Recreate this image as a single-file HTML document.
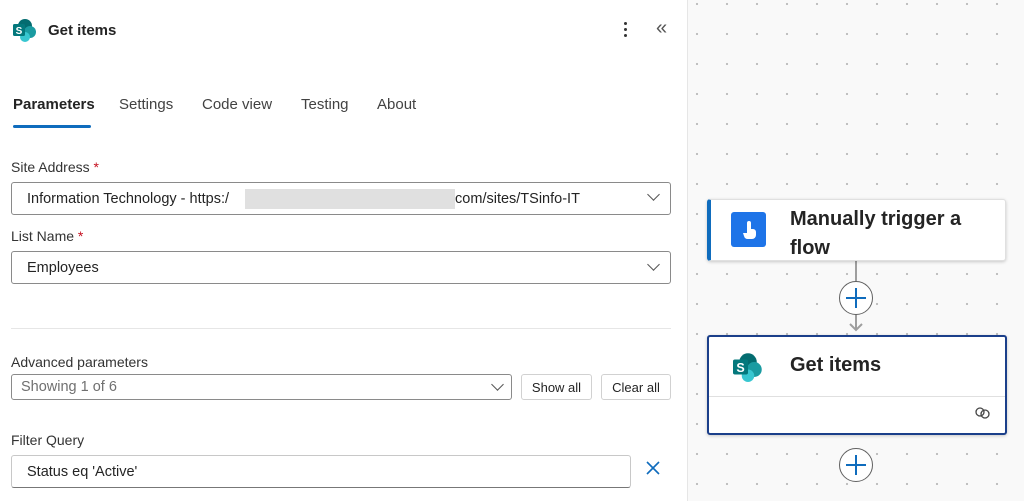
<!DOCTYPE html>
<html><head><style>
*{box-sizing:border-box;margin:0;padding:0}
body{width:1024px;height:501px;overflow:hidden;font-family:"Liberation Sans",sans-serif;color:#242424;position:relative;background:#fff}
.a{position:absolute}
.panel{left:0;top:0;width:688px;height:501px;background:#fff;border-right:1px solid #e6e6e6}
.canvas{left:688px;top:0;width:336px;height:501px;background-color:#f9f9f9;background-image:radial-gradient(circle,#bdbdbd 1px,transparent 1.3px);background-size:30px 30px;background-position:-6px -11px}
.inp{position:absolute;border:1px solid #8a8a8a;border-radius:3px;background:#fff;font-size:14.5px;padding-left:15px;display:flex;align-items:center}
.lbl{position:absolute;font-size:14px;color:#333}
.chev{position:absolute;width:9px;height:9px;border-right:1.3px solid #555;border-bottom:1.3px solid #555;transform:rotate(45deg)}
.btn{position:absolute;border:1px solid #d1d1d1;border-radius:3px;font-size:13px;display:flex;align-items:center;justify-content:center;background:#fff}
.tab{position:absolute;top:96px;font-size:15px;color:#424242}
.card{position:absolute;background:#fff;border-radius:3px;box-shadow:0 1px 3px rgba(0,0,0,.2)}
.plus{position:absolute;width:34px;height:34px;border:1.3px solid #616161;border-radius:50%;background:#fff}
.plus:before,.plus:after{content:"";position:absolute;background:#0f6cbd;left:50%;top:50%;transform:translate(-50%,-50%)}
.plus:before{width:20px;height:2px}.plus:after{width:2px;height:20px}
</style></head><body>
<div class="a panel">
 <svg class="a" style="left:12px;top:18px" width="26" height="24" viewBox="0 0 26 24"><circle cx="13" cy="8" r="7" fill="#036c70"/><circle cx="18" cy="14" r="6" fill="#1a9ba1"/><circle cx="13" cy="19" r="5" fill="#37c6d0"/><rect x="1" y="6" width="12" height="12" rx="1.5" fill="#03787c"/><text x="7" y="16" font-size="10" fill="#fff" text-anchor="middle" font-family="Liberation Sans" font-weight="bold">S</text></svg>
 <div class="a" style="left:48px;top:22px;font-size:15px;font-weight:bold;color:#242424">Get items</div>
 <div class="a" style="left:624px;top:22px;width:4px">
  <div style="width:3px;height:3px;background:#333;border-radius:50%;margin-bottom:3px"></div><div style="width:3px;height:3px;background:#333;border-radius:50%;margin-bottom:3px"></div><div style="width:3px;height:3px;background:#333;border-radius:50%"></div></div>
 <div class="a" style="left:656px;top:17px;font-size:20px;color:#555">«</div>
 <div class="tab" style="left:13px;color:#242424;font-weight:bold">Parameters</div>
 <div class="a" style="left:13px;top:125px;width:78px;height:3px;background:#0f6cbd;border-radius:2px"></div>
 <div class="tab" style="left:119px">Settings</div>
 <div class="tab" style="left:202px">Code view</div>
 <div class="tab" style="left:301px">Testing</div>
 <div class="tab" style="left:377px">About</div>

 <div class="lbl" style="left:11px;top:159px">Site Address <span style="color:#c50f1f">*</span></div>
 <div class="inp" style="left:11px;top:182px;width:660px;height:33px">Information Technology - https:/<span style="display:inline-block;width:210px;height:20px;background:#e0e0e0;margin-left:16px"></span>com/sites/TSinfo-IT</div>
 <div class="chev" style="left:649px;top:190px"></div>
 <div class="lbl" style="left:11px;top:228px">List Name <span style="color:#c50f1f">*</span></div>
 <div class="inp" style="left:11px;top:251px;width:660px;height:33px">Employees</div>
 <div class="chev" style="left:649px;top:260px"></div>
 <div class="a" style="left:11px;top:328px;width:660px;height:1px;background:#e6e6e6"></div>
 <div class="lbl" style="left:11px;top:354px">Advanced parameters</div>
 <div class="inp" style="left:11px;top:374px;width:501px;height:26px;padding-left:9px;color:#707070">Showing 1 of 6</div>
 <div class="chev" style="left:493px;top:380px"></div>
 <div class="btn" style="left:521px;top:374px;width:71px;height:26px">Show all</div>
 <div class="btn" style="left:601px;top:374px;width:70px;height:26px">Clear all</div>
 <div class="lbl" style="left:11px;top:432px">Filter Query</div>
 <div class="inp" style="left:11px;top:455px;width:620px;height:33px;border-color:#c8c8c8;border-bottom-color:#777">Status eq 'Active'</div>
 <svg class="a" style="left:645px;top:460px" width="16" height="16"><path d="M2 2L14 14M14 2L2 14" stroke="#0f6cbd" stroke-width="1.6"/></svg>
</div>
<div class="a canvas"></div>
<div class="a" style="left:855px;top:261px;width:2px;height:68px;background:#9e9e9e"></div>
<svg class="a" style="left:849px;top:322px" width="14" height="10"><path d="M1 2L7 8L13 2" stroke="#9e9e9e" stroke-width="2" fill="none"/></svg>
<div class="card" style="left:707px;top:199px;width:299px;height:62px;border:1px solid #e0e0e0;border-left:4px solid #0f6cbd">
 <div class="a" style="left:20px;top:12px;width:35px;height:35px;background:#1e74e8;border-radius:3px"></div>
 <svg class="a" style="left:29px;top:18px" width="18" height="24" viewBox="0 0 18 24"><path d="M7 16V5a2 2 0 0 1 4 0v6h2a3 3 0 0 1 3 3v3a4 4 0 0 1-4 4H8a4 4 0 0 1-4-3l-1-3h4z" fill="#fff"/></svg>
 <div class="a" style="left:79px;top:5px;font-size:20px;font-weight:bold;color:#242424;line-height:29px;width:200px">Manually trigger a flow</div>
</div>
<div class="plus" style="left:839px;top:281px"></div>
<div class="card" style="left:707px;top:335px;width:300px;height:100px;border:2px solid #1b3f8a">
 <svg class="a" style="left:22px;top:15px" width="34" height="30" viewBox="0 0 26 24"><circle cx="13" cy="8" r="7" fill="#036c70"/><circle cx="18" cy="14" r="6" fill="#1a9ba1"/><circle cx="13" cy="19" r="5" fill="#37c6d0"/><rect x="1" y="6" width="12" height="12" rx="1.5" fill="#03787c"/><text x="7" y="16" font-size="10" fill="#fff" text-anchor="middle" font-family="Liberation Sans" font-weight="bold">S</text></svg>
 <div class="a" style="left:81px;top:17px;font-size:20px;font-weight:bold;color:#242424">Get items</div>
 <div class="a" style="left:0;top:59px;width:296px;height:1px;background:#e0e0e0"></div>
 <svg class="a" style="left:264px;top:69px" width="20" height="14"><circle cx="7" cy="6" r="4" stroke="#444" stroke-width="1.3" fill="none"/><circle cx="12" cy="8" r="4" stroke="#444" stroke-width="1.3" fill="none"/></svg>
</div>
<div class="plus" style="left:839px;top:448px"></div>
</body></html>
